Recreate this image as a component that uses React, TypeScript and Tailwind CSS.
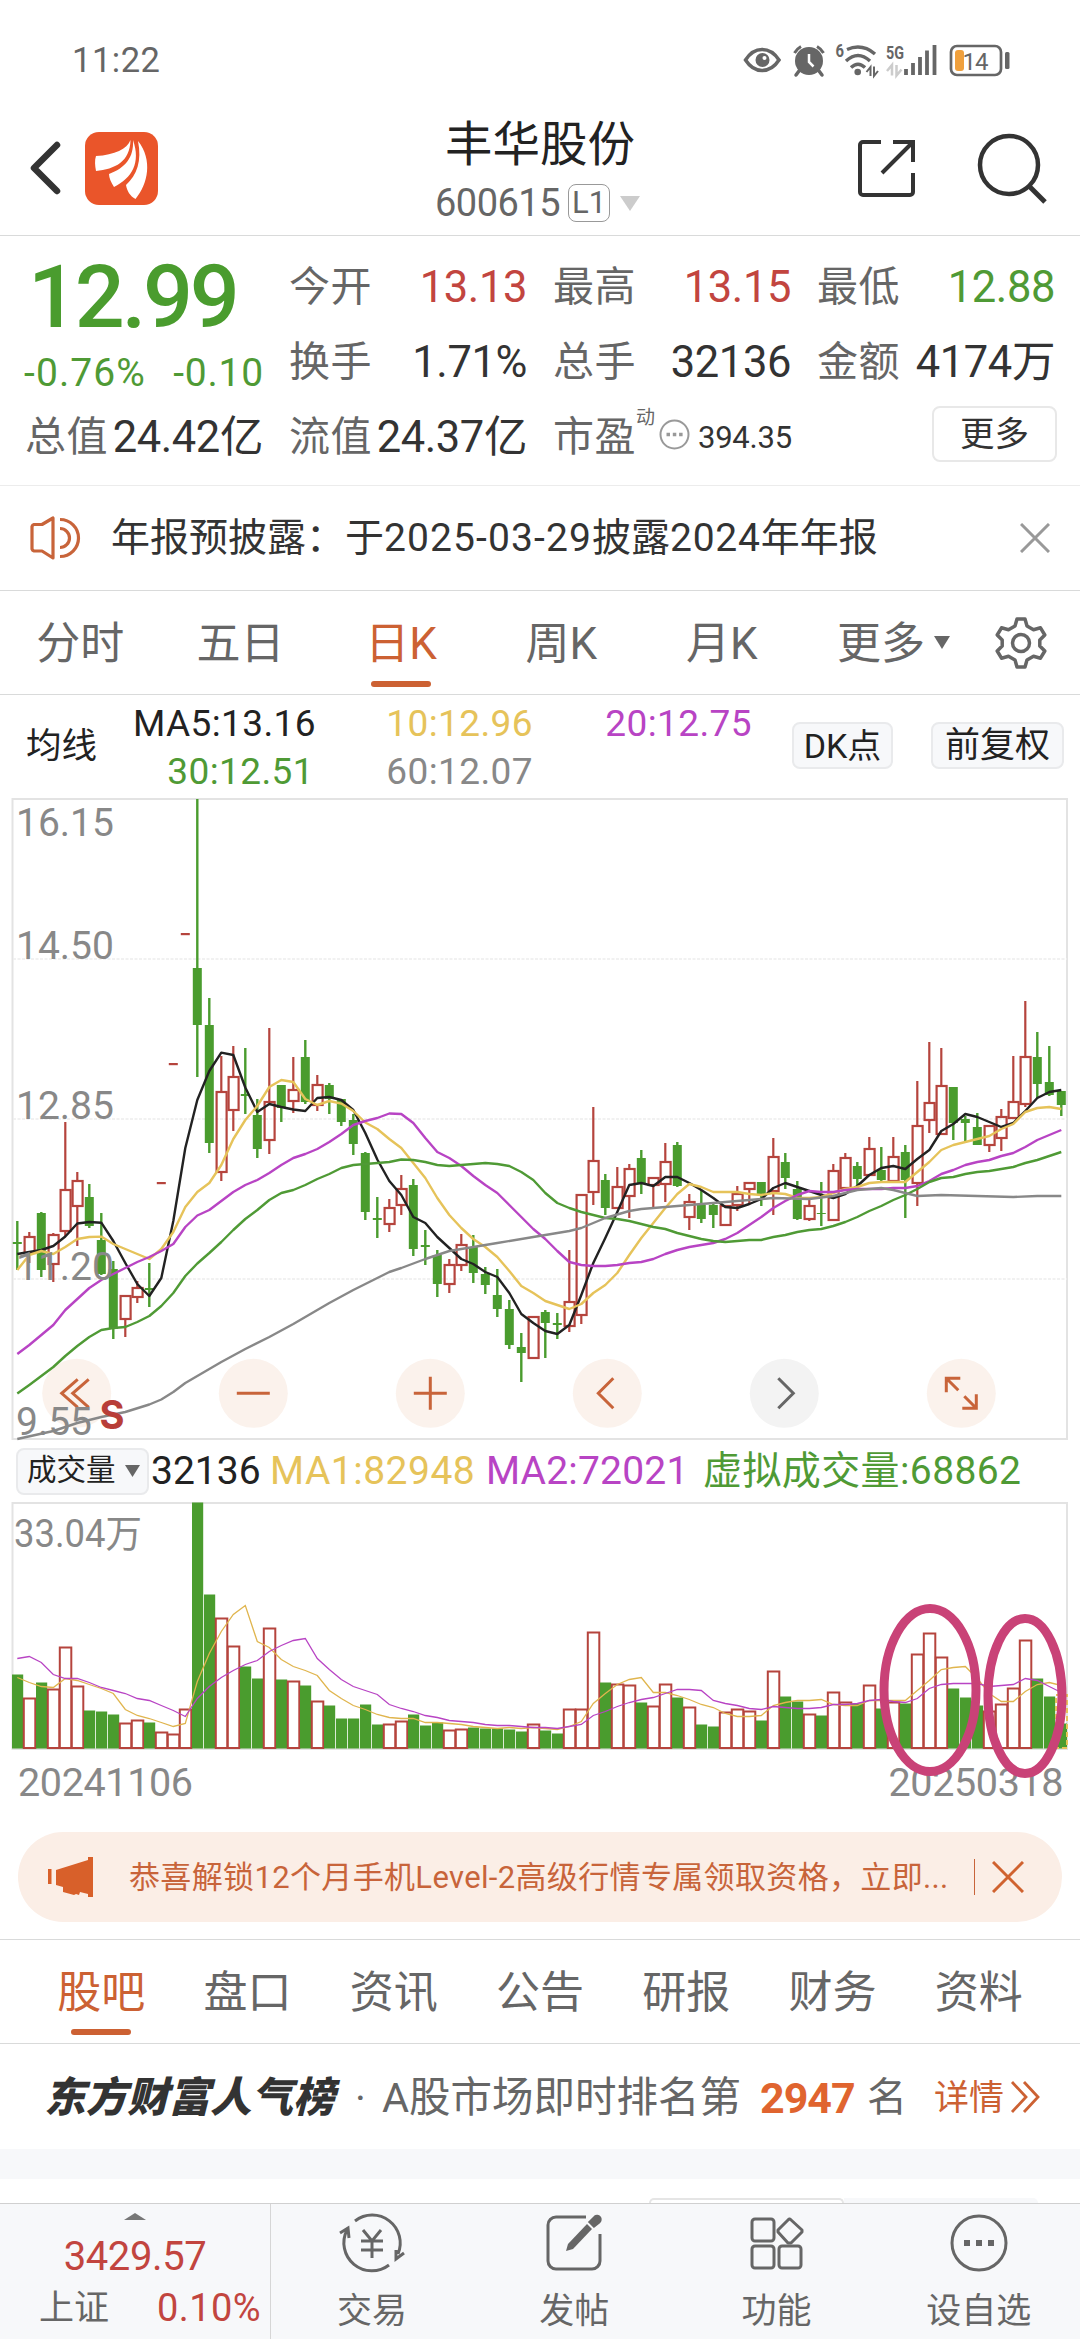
import type { ReactNode } from "react";

const RED = "#b5443d";
const GREEN = "#4a9c2e";
const YELLOW = "#e6c35a";
const PURPLE = "#b844c4";
const ORANGE = "#c8643a";

const FIRST_X = 17.3;
const STEP = 12;
const VOLUME_BASE = 1748.5;

type Candle = [kind: "r" | "g", high: number, top: number, bottom: number, low: number];

const candles: Candle[] = [
  ["g", 1221, 1242, 1244, 1270], ["r", 1232, 1237, 1253, 1263], ["g", 1212, 1213, 1270, 1277], ["r", 1233, 1235, 1264, 1282],
  ["r", 1122, 1190, 1231, 1236], ["r", 1172, 1181, 1206, 1246], ["g", 1184, 1197, 1226, 1228], ["g", 1213, 1240, 1274, 1275],
  ["g", 1261, 1269, 1329, 1339], ["r", 1295, 1296, 1319, 1337], ["r", 1281, 1288, 1297, 1303], ["g", 1263, 1288, 1290, 1307],
  ["r", 1183, 1183, 1183, 1183], ["r", 1064, 1064, 1064, 1064], ["r", 934, 934, 934, 934], ["g", 799, 968, 1025, 1077],
  ["g", 998, 1025, 1143, 1153], ["r", 1056, 1092, 1172, 1181], ["r", 1046, 1077, 1110, 1131], ["g", 1048, 1094, 1096, 1114],
  ["g", 1099, 1115, 1149, 1158], ["r", 1028, 1102, 1140, 1154], ["g", 1085, 1085, 1108, 1122], ["r", 1057, 1090, 1101, 1113],
  ["g", 1040, 1057, 1102, 1104], ["r", 1075, 1085, 1105, 1111], ["g", 1083, 1085, 1099, 1114], ["g", 1099, 1099, 1122, 1126],
  ["g", 1114, 1120, 1144, 1155], ["g", 1152, 1153, 1212, 1220], ["g", 1197, 1218, 1220, 1238], ["r", 1199, 1208, 1224, 1232],
  ["r", 1175, 1189, 1205, 1215], ["g", 1179, 1185, 1249, 1256], ["g", 1230, 1245, 1247, 1265], ["g", 1250, 1255, 1284, 1297],
  ["r", 1259, 1265, 1284, 1293], ["r", 1234, 1245, 1265, 1271], ["g", 1235, 1247, 1273, 1283], ["g", 1267, 1274, 1285, 1294],
  ["g", 1269, 1295, 1309, 1317], ["g", 1300, 1309, 1345, 1349], ["g", 1333, 1347, 1353, 1382], ["r", 1317, 1317, 1358, 1358],
  ["g", 1310, 1312, 1323, 1358], ["g", 1313, 1323, 1325, 1339], ["r", 1250, 1302, 1326, 1332], ["r", 1195, 1195, 1315, 1324],
  ["r", 1107, 1161, 1192, 1205], ["g", 1174, 1180, 1208, 1215], ["r", 1167, 1187, 1208, 1208], ["r", 1164, 1169, 1196, 1218],
  ["g", 1150, 1158, 1184, 1194], ["r", 1178, 1178, 1185, 1207], ["r", 1143, 1162, 1184, 1202], ["g", 1142, 1145, 1186, 1187],
  ["r", 1194, 1202, 1217, 1230], ["g", 1190, 1205, 1219, 1223], ["g", 1204, 1205, 1215, 1228], ["r", 1206, 1206, 1225, 1225],
  ["r", 1186, 1194, 1205, 1211], ["r", 1183, 1183, 1189, 1205], ["g", 1182, 1182, 1195, 1206], ["r", 1138, 1157, 1191, 1215],
  ["g", 1153, 1162, 1178, 1189], ["g", 1181, 1189, 1219, 1220], ["r", 1200, 1206, 1219, 1221], ["g", 1182, 1213, 1214, 1226],
  ["r", 1164, 1171, 1220, 1220], ["r", 1153, 1158, 1188, 1188], ["g", 1162, 1166, 1179, 1185], ["r", 1137, 1149, 1175, 1176],
  ["g", 1147, 1170, 1180, 1181], ["r", 1137, 1157, 1181, 1181], ["g", 1145, 1152, 1180, 1218], ["r", 1081, 1126, 1183, 1206],
  ["r", 1042, 1103, 1120, 1133], ["r", 1048, 1086, 1134, 1134], ["g", 1087, 1087, 1123, 1140], ["g", 1116, 1119, 1123, 1143],
  ["g", 1113, 1127, 1145, 1145], ["r", 1125, 1126, 1145, 1152], ["r", 1109, 1117, 1138, 1151], ["r", 1056, 1102, 1118, 1118],
  ["r", 1001, 1057, 1104, 1107], ["g", 1032, 1057, 1084, 1098], ["g", 1046, 1082, 1095, 1096], ["g", 1091, 1091, 1105, 1116],
];

const ma5 = [
  1254, 1252, 1250, 1246, 1236.5, 1223.5, 1222, 1222.7, 1241, 1263, 1284, 1296, 1278, 1221, 1148, 1100, 1071, 1052.6, 1055, 1087.5,
  1112, 1104, 1107, 1109.5, 1111, 1098, 1097, 1100, 1110, 1133, 1159.5, 1181, 1195, 1217, 1223, 1237, 1248, 1259, 1264, 1272,
  1277, 1293, 1314, 1323, 1331, 1334, 1325, 1295, 1263, 1238, 1212, 1185, 1183, 1186, 1177, 1177, 1183, 1190, 1198, 1207,
  1208, 1204, 1199, 1188, 1183, 1187, 1191, 1195, 1198, 1194, 1186, 1175, 1168, 1166, 1169, 1159, 1150, 1131, 1124, 1114,
  1117, 1122, 1127, 1123, 1111, 1098, 1092, 1090,
];

const ma10 = [
  1270, 1255, 1251, 1254, 1247, 1239, 1237, 1236.6, 1244, 1249, 1254, 1259, 1249, 1232, 1207, 1192, 1183, 1165, 1139, 1120,
  1106, 1087, 1080, 1082, 1099, 1105, 1101, 1103.6, 1111, 1122.5, 1129, 1139, 1148, 1163, 1178, 1198, 1215, 1228, 1239, 1247,
  1257, 1271, 1286, 1293, 1301, 1305, 1309, 1304, 1293, 1285, 1273, 1255, 1238, 1223, 1208, 1194, 1184, 1187, 1192, 1192,
  1192, 1194, 1195, 1193, 1194, 1198, 1198, 1197, 1193, 1189, 1187, 1183, 1182, 1182, 1182, 1172, 1162, 1150, 1145, 1142,
  1139, 1136, 1129, 1124, 1112, 1108, 1107, 1109,
];

const ma20 = [
  1354, 1345, 1335, 1325, 1310, 1299, 1288, 1280, 1274, 1268, 1262, 1257, 1251, 1244, 1227, 1215.5, 1210, 1201, 1192, 1185,
  1180, 1173, 1165, 1158, 1154, 1149, 1142, 1134, 1125, 1121, 1118, 1113.5, 1114, 1123, 1138, 1152, 1158, 1166, 1176, 1185,
  1193, 1205, 1217, 1229, 1239, 1251, 1262, 1265, 1266, 1266, 1265, 1263, 1262, 1259, 1254, 1250, 1247, 1245, 1243, 1239,
  1233, 1225, 1217, 1208, 1201, 1195, 1191, 1192, 1192, 1190, 1189, 1189, 1189, 1188, 1188, 1186, 1181, 1174, 1170, 1165,
  1162, 1160, 1156, 1153, 1147, 1140, 1135, 1130,
];

const ma30 = [
  1393.6, 1385, 1376, 1367, 1356, 1346, 1337, 1330, 1328, 1327, 1322, 1316, 1306, 1293, 1276, 1263.5, 1253, 1242, 1230, 1219,
  1210, 1200, 1193, 1190, 1185, 1179, 1174, 1168, 1165, 1164, 1163, 1162, 1159.5, 1160, 1162, 1165, 1166, 1165, 1164, 1163,
  1164, 1166, 1172, 1180, 1193, 1203, 1208, 1212, 1215, 1218, 1219, 1221, 1224, 1227, 1229, 1233, 1236, 1239, 1241, 1242,
  1241, 1240, 1240, 1237, 1235, 1232, 1230, 1229, 1226, 1222, 1217, 1211, 1206, 1200, 1195, 1189, 1182, 1178, 1177, 1174,
  1172, 1171, 1169, 1167, 1163, 1160, 1156, 1152,
];

// slow average, only the days where it bends
const ma60: [number, number][] = [
  [0, 1439], [3, 1431], [5, 1423], [7, 1417], [9, 1412], [11, 1404.5], [12, 1399.5], [13, 1392], [14, 1383], [15, 1376],
  [17, 1362], [19, 1349], [21, 1337], [23, 1324], [26, 1303], [28, 1290], [31, 1272], [32, 1268], [34, 1259], [36, 1251],
  [38, 1247], [40, 1243], [43, 1237], [46, 1231], [47, 1228], [49, 1218], [51, 1211], [52, 1209], [53, 1208], [56, 1205],
  [59, 1202], [63, 1198], [66, 1199], [68, 1196], [70, 1190], [72, 1188], [73, 1190], [74, 1193], [75, 1196], [77, 1195],
  [80, 1196], [83, 1197], [85, 1196], [87, 1196],
];

const volumes = [
  74, 50, 66, 59, 101, 62, 38, 37, 34, 25, 28, 26, 16, 14, 39, 246, 154, 130, 102, 82, 70, 120, 69, 67, 63, 47, 43, 30, 30, 44,
  24, 24, 27, 34, 23, 26, 18, 19, 21, 20, 20, 19, 17, 24, 18, 15, 39, 39, 116, 66, 64, 63, 46, 42, 64, 51, 41, 24, 22, 36,
  39, 37, 28, 77, 52, 47, 34, 33, 56, 46, 45, 63, 40, 46, 45, 94, 115, 91, 60, 51, 43, 37, 44, 60, 108, 70, 52, 25,
];

const volMa1 = [
  71, 66, 62, 61, 70, 68, 64, 60, 55, 39, 33, 30, 26, 22, 25, 67, 95, 117, 134, 143, 107, 101, 89, 82, 78, 73, 58, 50, 43, 39,
  34, 31, 30, 30, 26, 26, 25, 24, 22, 21, 20, 21, 20, 21, 20, 19, 22, 27, 45, 55, 64, 69, 71, 56, 56, 53, 49, 44, 41, 35,
  32, 32, 33, 43, 46, 48, 48, 49, 44, 43, 43, 48, 48, 48, 48, 58, 68, 79, 81, 82, 70, 55, 47, 47, 57, 64, 66, 63,
];

const volMa2 = [
  90, 92, 86, 74, 70, 70, 66, 61, 58, 55, 50, 48, 43, 38, 32, 50, 62, 71, 78, 84, 88, 97, 103, 108, 110, 90, 79, 69, 62, 58,
  54, 44, 40, 37, 33, 31, 28, 27, 26, 24, 23, 23, 22, 21, 21, 20, 22, 24, 33, 37, 42, 46, 49, 51, 55, 59, 59, 58, 48, 45,
  43, 40, 39, 42, 41, 40, 40, 41, 44, 44, 45, 48, 49, 47, 46, 50, 60, 64, 65, 65, 65, 62, 63, 64, 70, 68, 62, 56,
];

const xAt = (i: number) => FIRST_X + i * STEP;
const linePoints = (ys: number[]) => ys.map((y, i) => `${xAt(i)},${y}`).join(" ");
const volumePoints = (hs: number[]) => hs.map((h, i) => `${xAt(i)},${VOLUME_BASE - h}`).join(" ");

function StatusBar() {
  return (
    <div className="flex h-[84px] items-start justify-between pr-[70px] pl-[72px]">
      <span className="mt-[42px] text-[34.5px] leading-9 tracking-[0.5px] text-[#666]">11:22</span>
      <div className="mt-[42px] flex items-center">
        <svg width="38" height="36" viewBox="744 42 38 36">
          <path d="M746.5 60C751 53 757 49.500 763 49.500S775.500 53 780 60C775.500 67 769 70.500 763 70.500S751 67 746.500 60Z" fill="none" stroke="#666" strokeWidth="3.500" />
          <circle cx="763.500" cy="60" r="7" fill="#666" />
          <circle cx="765.500" cy="58" r="2" fill="#fff" />
        </svg>
        <svg className="ml-3" width="32" height="36" viewBox="794 42 32 36">
          <circle cx="810" cy="61" r="14" fill="#666" />
          <path d="M795.500 53A17 17 0 0 1 802 46.500M824.500 53A17 17 0 0 0 818 46.500" fill="none" stroke="#666" strokeWidth="3" />
          <path d="m800 71-3 4m23-4 3 4" stroke="#666" strokeWidth="3.500" strokeLinecap="round" />
          <path d="M810 54v8l4.500 4.500" fill="none" stroke="#fff" strokeWidth="2.500" />
        </svg>
        <svg className="ml-[10px] overflow-visible" width="44" height="36" viewBox="836 42 44 36">
          <text x="836.500" y="57" fontSize="18" fontWeight="700" fill="#666" textLength="8.500" lengthAdjust="spacingAndGlyphs">6</text>
          <g fill="none" stroke="#666" strokeWidth="3.500">
            <path d="M848 49.500Q863 43 876 54M847 61Q859 50 871 61M852 67.500Q859 61 866 67.500" />
          </g>
          <circle cx="858.700" cy="72" r="3.300" fill="#666" />
          <path d="M871.500 76v-9l-4 5M875 66.500v9.500l4-5" fill="none" stroke="#666" strokeWidth="2" />
        </svg>
        <svg className="ml-[7px] overflow-visible" width="51" height="36" viewBox="887 42 51 36">
          <text x="887" y="58.500" fontSize="18" fontWeight="700" fill="#666" textLength="18" lengthAdjust="spacingAndGlyphs">5G</text>
          <path d="M893 75.500V65l-5 6M897.500 65v10.500l5-6" fill="none" stroke="#ccc" strokeWidth="2.500" />
          <path d="M907 69v6M914 63v12M921 57v18M928 50.500V75M935.500 45v30" stroke="#666" strokeWidth="3.800" />
        </svg>
        <svg className="ml-3" width="61" height="36" viewBox="949.500 42 61 36">
          <rect x="951.500" y="46" width="50" height="29" rx="6" fill="none" stroke="#666" strokeWidth="2.700" />
          <rect x="955.500" y="50" width="9" height="21" rx="3" fill="#f0a03c" />
          <text x="963" y="69.500" fontSize="24" fill="#666" textLength="26">14</text>
          <rect x="1005.500" y="52" width="4.500" height="17" rx="1.500" fill="#666" />
        </svg>
      </div>
    </div>
  );
}

function Header() {
  return (
    <header className="h-[236px] border-b border-[#d9dada]">
      <StatusBar />
      <div className="grid h-[151px] grid-cols-[400px_280px_400px]">
        <div className="flex items-start pl-7">
          <svg className="mt-[56px]" width="36" height="56" viewBox="28 140 36 56">
            <path d="M57 145 34 168l23 23" fill="none" stroke="#333" strokeWidth="6.500" strokeLinecap="round" strokeLinejoin="round" />
          </svg>
          <svg className="mt-12 ml-[21px]" width="73" height="73" viewBox="0 0 73 73">
            <rect width="73" height="73" rx="14" fill="#ea552a" />
            <path d="M45.500 8C42 17 30 23 11 24c-1.500 4-1 10 0 15 19-2 34-9 34.500-31Z" fill="#fff" />
            <path d="M48 8c1 18-8 28-24 34 0 4 2 8 5 13 18-9 27-24 19-47Z" fill="#fff" />
            <path d="M53 9c4 20-1 34-12 44 1 6 4 11 9.500 14C63 52 68 28 53 9Z" fill="#fff" />
          </svg>
        </div>
        <div className="flex flex-col items-center">
          <h1 className="mt-[37px] text-[47.500px] leading-[48px] text-[#222]">丰华股份</h1>
          <div className="mt-[15px] flex items-center gap-[9px] pr-1">
            <span className="text-[38px] leading-[38px] tracking-[-0.5px] text-[#666]">600615</span>
            <span className="-ml-px flex h-[38px] w-[42px] items-center justify-center rounded-lg border border-[#999] text-[31px] text-[#666]">L1</span>
            <svg width="22" height="15" viewBox="0 0 22 15">
              <path d="M1 0h20L11 15Z" fill="#ccc" />
            </svg>
          </div>
        </div>
        <div className="flex items-start justify-end pr-[33px]">
          <svg className="mt-[54px]" width="60" height="60" viewBox="856 138 60 60" fill="none" stroke="#333" strokeWidth="4">
            <path d="M881 142h-18a3 3 0 0 0-3 3v47a3 3 0 0 0 3 3h47a3 3 0 0 0 3-3v-19" />
            <path d="M893 142h20v20M912 143l-30 30" />
          </svg>
          <svg className="mt-[48px] ml-[60px]" width="71" height="72" viewBox="976 132 71 72" fill="none" stroke="#333" strokeWidth="4.500">
            <circle cx="1009" cy="165" r="29" />
            <path d="m1029 186 16 16" strokeWidth="5" />
          </svg>
        </div>
      </div>
    </header>
  );
}

function Quote({ label, value, tone = "text-[#333]" }: { label: string; value: string; tone?: string }) {
  return (
    <div className="flex items-center justify-between whitespace-nowrap">
      <span className="-ml-px text-[41px] tracking-[0.5px] text-[#666]">{label}</span>
      <span className={`-mr-px text-[43.500px] tracking-[-0.4px] ${tone}`}>{value}</span>
    </div>
  );
}

function QuotePanel() {
  return (
    <section className="grid h-[250px] grid-cols-4 grid-rows-[75px_75px_75px] gap-x-7 border-b border-[#ececec] px-[26px] pt-[14px] leading-none">
      <div className="row-span-2 flex flex-col">
        <span className="mt-[3px] ml-0.5 text-[88px] font-medium tracking-[-3.200px] text-[#4a9c2e]">12.99</span>
        <div className="mt-[13px] -mr-0.5 -ml-0.5 flex justify-between text-[39px] text-[#4f9a35]">
          <span className="tracking-[1.100px]">-0.76%</span>
          <span className="tracking-[0.8px]">-0.10</span>
        </div>
      </div>
      <Quote label="今开" value="13.13" tone="text-[#c2453f]" />
      <Quote label="最高" value="13.15" tone="text-[#c2453f]" />
      <Quote label="最低" value="12.88" tone="text-[#4f9a35]" />
      <Quote label="换手" value="1.71%" />
      <Quote label="总手" value="32136" />
      <Quote label="金额" value="4174万" />
      <Quote label="总值" value="24.42亿" />
      <Quote label="流值" value="24.37亿" />
      <div className="flex items-center whitespace-nowrap">
        <span className="-ml-px text-[41px] tracking-[0.5px] text-[#666]">市盈</span>
        <span className="mb-10 text-[19px] text-[#666]">动</span>
        <svg className="mb-1.5 ml-1" width="31" height="31" viewBox="0 0 31 31">
          <circle cx="15.500" cy="15.500" r="14" fill="none" stroke="#999" strokeWidth="2" />
          <path d="M7.500 15.500h3.500m2.800 0h3.500m2.800 0h3.500" stroke="#999" strokeWidth="3.500" />
        </svg>
        <span className="-mr-0.5 ml-auto text-[31px] tracking-[-0.2px] text-[#333]">394.35</span>
      </div>
      <div className="flex items-center justify-end">
        <button className="-mr-[3px] mb-[7px] flex h-14 w-[125px] items-center justify-center rounded-lg border-2 border-[#e8e8e8] text-[34.500px] text-[#333]">
          更多
        </button>
      </div>
    </section>
  );
}

function Notice() {
  return (
    <section className="flex h-[105px] items-center border-b border-[#d9dada] pr-[30px] pl-[29px]">
      <svg width="52" height="44" viewBox="0 0 52 44" fill="none" stroke={ORANGE} strokeWidth="3.200">
        <path d="M3 10.500a3 3 0 0 1 2-2h8L24 2v40l-11-7H5a3 3 0 0 1-2-2Z" strokeLinejoin="round" />
        <path d="M31 3.500a18.500 18.500 0 0 1 0 37M31 12.500a9.500 9.500 0 0 1 0 19" />
      </svg>
      <p className="ml-[30px] text-[39px] leading-none whitespace-nowrap text-[#333]">
        年报预披露：于<span className="tracking-[1.100px]">2025-03-29</span>披露<span className="tracking-[0.8px]">2024</span>年年报
      </p>
      <svg className="ml-auto" width="30" height="30" viewBox="0 0 30 30" stroke="#999" strokeWidth="3">
        <path d="m1 1 28 28M29 1 1 29" />
      </svg>
    </section>
  );
}

const periods = ["分时", "五日", "日K", "周K", "月K"];

function PeriodTabs() {
  return (
    <nav className="flex h-[104px] border-b border-[#d9dada] text-[44px] leading-none text-[#666]">
      {periods.map((name) => (
        <div key={name} className={`relative flex w-[160.4px] items-center justify-center pt-[3px] ${name === "日K" ? "text-[#cc6133]" : ""}`}>
          {name}
          {name === "日K" && <span className="absolute bottom-[7px] h-1.5 w-15 rounded-full bg-[#cc6133]" />}
        </div>
      ))}
      <div className="flex items-center pt-[3px] pl-[35px]">
        更多
        <svg className="mb-[3px] ml-[9px]" width="16" height="13" viewBox="0 0 16 13">
          <path d="M0 0h16L8 13Z" fill="#666" />
        </svg>
      </div>
      <svg className="mt-[25px] ml-11" width="54" height="54" viewBox="0 0 54 54" fill="none" stroke="#666" strokeWidth="3.500" strokeLinejoin="round">
        <path d="M23 3h8l2 7 6.500 3.700 7-1.900 4.300 7.200-5 5v6l5 5-4.300 7.200-7-1.900L33 44l-2 7h-8l-2-7-6.500-3.700-7 1.900L3.200 35l5-5v-6l-5-5 4.300-7.200 7 1.900L21 10Z" />
        <circle cx="27" cy="27" r="8.500" />
      </svg>
    </nav>
  );
}

function Averages() {
  return (
    <section className="flex h-[104px] leading-none text-[#222]">
      <span className="w-[116px] self-center pt-0.5 pl-[26px] text-[35.500px]">均线</span>
      <div className="grid w-[636px] grid-cols-[200px_217px_219px] grid-rows-[48px_48px] items-center pt-[5px] text-right text-[37px] tracking-[0.4px]">
        <span>MA5:13.16</span>
        <span className="text-[#e6c35a]">10:12.96</span>
        <span className="text-[#b844c4]">20:12.75</span>
        <span className="pr-0.5 text-[#4f9a35]">30:12.51</span>
        <span className="text-[#888]">60:12.07</span>
      </div>
      <button className="mt-7 ml-[40px] h-[47px] w-[101px] rounded-lg border-2 border-[#e9eaec] bg-[#f7f8fa] text-[34px]">DK点</button>
      <button className="mt-7 ml-[38px] h-[47px] w-[133px] rounded-lg border-2 border-[#e9eaec] bg-[#f7f8fa] text-[35px]">前复权</button>
    </section>
  );
}

const priceLabels: [string, number][] = [
  ["16.15", 836],
  ["14.50", 958.5],
  ["12.85", 1119],
  ["11.20", 1279.5],
  ["9.55", 1435],
];

const controls: { x: number; d: string; muted?: boolean }[] = [
  { x: 76.7, d: "M1-14-15 0 1 14M12-14-4 0 12 14" },
  { x: 253.3, d: "M-16.500 0h33" },
  { x: 430.3, d: "M-16.500 0h33M0-16.500v33" },
  { x: 607.3, d: "M6-15-9 0 6 15" },
  { x: 784.3, d: "M-6-15 9 0-6 15", muted: true },
  { x: 961.3, d: "M-3-3-14-14M-1-15h-14v14M3 3 14 14M1 15h14V1" },
];

function PriceChart() {
  return (
    <svg className="block overflow-visible" width="1080" height="642" viewBox="0 798 1080 642">
      <g fill="none" stroke="#e3e3e3" strokeWidth="2">
        <rect x="12.500" y="799" width="1054.500" height="640" />
        <path d="M13 959h1054M13 1119h1054M13 1279h1054" stroke="#ededed" strokeWidth="1.500" strokeDasharray="3 1.500" />
      </g>
      {controls.map(({ x, d, muted }) => (
        <g key={x} transform={`translate(${x} 1393.300)`}>
          <circle r="34.500" fill={muted ? "#f3f3f3" : "#fbf2ec"} />
          <path d={d} fill="none" stroke={muted ? "#666" : ORANGE} strokeWidth="3" />
        </g>
      ))}
      {candles.map(([kind, high, top, bottom, low], i) => {
        const x = xAt(i);
        if (kind === "g") {
          return (
            <g key={i} fill={GREEN}>
              <rect x={x - 1.2} y={high} width="2.400" height={low - high} />
              <rect x={x - 4.5} y={top} width="9" height={bottom - top} />
            </g>
          );
        }
        if (high === low) return <rect key={i} x={x - 4.5} y={top - 1} width="9" height="2.200" fill={RED} />;
        return (
          <g key={i} stroke={RED} strokeWidth="2.200" fill="none">
            <path d={`M${x} ${high}V${top}M${x} ${bottom}V${low}`} />
            <rect x={x - 4.7} y={top} width="10" height={bottom - top} />
          </g>
        );
      })}
      <g fill="none" strokeWidth="2.400" strokeLinejoin="round">
        <polyline points={linePoints(ma5)} stroke="#222" />
        <polyline points={linePoints(ma10)} stroke={YELLOW} />
        <polyline points={linePoints(ma20)} stroke={PURPLE} />
        <polyline points={linePoints(ma30)} stroke="#4f9a35" />
        <polyline points={ma60.map(([i, y]) => `${xAt(i)},${y}`).join(" ")} stroke="#888" />
      </g>
      <g fill="#888" fontSize="39">
        {priceLabels.map(([label, y]) => (
          <text key={label} x="16" y={y}>{label}</text>
        ))}
      </g>
      <text x="99.500" y="1429" fontSize="40" fontWeight="700" fill="#b83e38" fontFamily="Inter, sans-serif" textLength="25" lengthAdjust="spacingAndGlyphs">S</text>
    </svg>
  );
}

function VolumeChart() {
  return (
    <section>
      <div className="flex h-[62px] items-center pl-4 text-[39px] leading-none whitespace-nowrap">
        <button className="flex h-[47px] w-[133px] items-center gap-[9px] rounded-lg border-2 border-[#e9eaec] bg-[#f7f8fa] pl-[9px] text-[29.500px] text-[#222]">
          成交量
          <svg width="15" height="12" viewBox="0 0 15 12">
            <path d="M0 0h15L7.500 12Z" fill="#666" />
          </svg>
        </button>
        <span className="ml-0.5 w-[119px] text-[#222]">32136</span>
        <span className="w-[216px] tracking-[0.5px] text-[#e6c35a]">MA1:82948</span>
        <span className="w-[217px] tracking-[0.2px] text-[#b844c4]">MA2:72021</span>
        <span className="tracking-[0.4px] text-[#4f9a35]">虚拟成交量:68862</span>
      </div>
      <svg className="block" width="1080" height="318" viewBox="0 1502 1080 318">
        <rect x="12.500" y="1503" width="1054.500" height="246" fill="none" stroke="#e3e3e3" strokeWidth="2" />
        <text x="14" y="1547" fontSize="38" fill="#888" textLength="128" lengthAdjust="spacingAndGlyphs">33.04万</text>
        {volumes.map((h, i) => {
          const x = xAt(i);
          return candles[i][0] === "g" ? (
            <rect key={i} x={x - 5.3} y={VOLUME_BASE - h} width={i === 87 ? 11 : 11.2} height={h} fill={GREEN} />
          ) : (
            <rect key={i} x={x - 5.5} y={VOLUME_BASE - h} width="11.500" height={h - 0.5} fill="#fff" stroke={RED} strokeWidth="2" />
          );
        })}
        {/* projected full-day volume */}
        <rect x="1056" y="1695" width="11" height="53" fill="none" stroke={YELLOW} strokeWidth="2" strokeDasharray="5 3" />
        <g fill="none" strokeWidth="1.300">
          <polyline points={volumePoints(volMa1)} stroke="#e0b54e" />
          <polyline points={volumePoints(volMa2)} stroke={PURPLE} />
        </g>
        <g fontSize="39.500" fill="#888">
          <text x="18" y="1796" textLength="175">20241106</text>
          <text x="1063.500" y="1796" textAnchor="end" textLength="175">20250318</text>
        </g>
        <g fill="none" stroke="#c94277" strokeWidth="9">
          <ellipse cx="930" cy="1690" rx="46" ry="81.500" />
          <ellipse cx="1025" cy="1696" rx="37" ry="77.500" />
        </g>
      </svg>
    </section>
  );
}

function Promo() {
  return (
    <section className="h-[120px] border-b border-[#d9dada] px-[18px] pt-3">
      <div className="flex h-[90px] items-center rounded-full bg-[#fbeee6] pr-[38px] pl-[29px] text-[#c8643a]">
        <svg width="47" height="42" viewBox="0 0 47 42" fill="#d8602a">
          <path d="M1 13h3.500v15H1zM9 14 41 4V1h5v40h-5v-3l-8-2-1 3-3-1-2 1-11-3v-5l-7-2Z" />
        </svg>
        <p className="ml-[35px] text-[31px] leading-none tracking-[0.35px] whitespace-nowrap">恭喜解锁12个月手机Level-2高级行情专属领取资格，立即...</p>
        <span className="ml-auto h-9 w-px bg-[#c8643a]" />
        <svg className="ml-[17px]" width="32" height="32" viewBox="0 0 32 32" stroke="#d0622f" strokeWidth="3">
          <path d="m1 1 30 30M31 1 1 31" />
        </svg>
      </div>
    </section>
  );
}

const sections = ["股吧", "盘口", "资讯", "公告", "研报", "财务", "资料"];

function SectionTabs() {
  return (
    <nav className="grid h-[104px] grid-cols-7 border-b border-[#d9dada] px-7 text-[44px] leading-none text-[#666]">
      {sections.map((name, i) => (
        <div key={name} className={`relative flex items-center justify-center pt-[3px] ${i === 0 ? "text-[#cc6133]" : ""}`}>
          {name}
          {i === 0 && <span className="absolute bottom-[8px] h-1.5 w-15 rounded-full bg-[#cc6133]" />}
        </div>
      ))}
    </nav>
  );
}

function RankRow() {
  return (
    <section className="flex h-[105px] items-center pt-[3px] pl-[44px] text-[41.500px] leading-none whitespace-nowrap text-[#666]">
      <span className="w-[311px] text-[41.500px] font-black italic text-[#333]">东方财富人气榜</span>
      <span className="w-[27px]">·</span>
      <span>A股市场即时排名第</span>
      <span className="ml-auto w-[107px] text-[43px] font-bold tracking-[-1px] text-[#e0642f]">2947</span>
      <span className="text-[40px]">名</span>
      <span className="ml-[27px] text-[35px] text-[#cc6133]">详情</span>
      <svg className="mr-[39px] ml-[6px] mb-[3px]" width="31" height="32" viewBox="0 0 31 32" fill="none" stroke="#cc6133" strokeWidth="2.800">
        <path d="m2 1 14 15L2 31M14 1l14 15-14 15" />
      </svg>
    </section>
  );
}

function NavItem({ label, children }: { label: string; children: ReactNode }) {
  return (
    <div className="flex flex-1 flex-col items-center text-[35px] leading-none text-[#666]">
      <svg className="mt-[9px] mb-[21px]" width="66" height="60" viewBox="-33 -30 66 60" fill="none" stroke="#666" strokeWidth="3">
        {children}
      </svg>
      {label}
    </div>
  );
}

function BottomBar() {
  return (
    <footer className="flex h-[136px] border-t border-[#d0d0d0] bg-[#f7f8fa]">
      <div className="flex w-[271px] flex-col items-center border-r border-[#d6d6d6] leading-none">
        <svg className="mt-[9px]" width="22" height="7" viewBox="0 0 22 7">
          <path d="M0 7h22L11 0Z" fill="#777" />
        </svg>
        <span className="mt-[17px] text-[40px] tracking-[-0.4px] text-[#c2453f]">3429.57</span>
        <div className="mt-[12px] flex w-full items-center justify-between pr-[9px] pl-[39px]">
          <span className="text-[35px] text-[#666]">上证</span>
          <span className="text-[38px] tracking-[0.4px] text-[#c2453f]">0.10%</span>
        </div>
      </div>
      <NavItem label="交易">
        <path d="M-17-22A28 28 0 0 1 26 11M17 22A28 28 0 0 1-25-13M-32-10l8-5 1 10M32 10l-8 6V7" />
        <path d="m-9-13 9 11 9-11M-11-2h22M-11 7h22M0-2v17" />
      </NavItem>
      <NavItem label="发帖">
        <path d="M12-26h-30a8 8 0 0 0-8 8v36a8 8 0 0 0 8 8h36a8 8 0 0 0 8-8v-27" />
        <path d="m-8 8 2-7 19-20 5 5L-1 6Z" fill="#666" stroke="none" />
        <path d="m16-21 5-5a2 2 0 0 1 4 5l-5 4Z" fill="#666" />
      </NavItem>
      <NavItem label="功能">
        <rect x="-25" y="-24" width="22" height="22" rx="3" />
        <rect x="-25" y="3" width="22" height="22" rx="3" />
        <rect x="2" y="3" width="22" height="22" rx="3" />
        <path d="m12-24 1 0L25-13v2L14 0h-3L1-11v-2Z" strokeLinejoin="round" />
      </NavItem>
      <NavItem label="设自选">
        <circle r="27" />
        <path d="M-15 0h6M-3 0h6M9 0h6" strokeWidth="6" />
      </NavItem>
    </footer>
  );
}

export default function App() {
  return (
    <main className="h-[2339px] w-[1080px] overflow-hidden bg-white font-['Roboto','Noto_Sans_CJK_SC',sans-serif]">
      <Header />
      <QuotePanel />
      <Notice />
      <PeriodTabs />
      <div className="-mt-px">
        <Averages />
      </div>
      <PriceChart />
      <VolumeChart />
      <Promo />
      <SectionTabs />
      <RankRow />
      <div className="h-[30px] bg-[#f7f8fa]" />
      <div className="flex h-6 items-end pl-[649px]">
        <div className="h-[5px] w-[195px] rounded-t-lg border-2 border-b-0 border-[#e5e5e5]" />
        <div className="h-[5px] w-[194px] rounded-tr-lg bg-[#f7f8fa]" />
      </div>
      <BottomBar />
    </main>
  );
}
